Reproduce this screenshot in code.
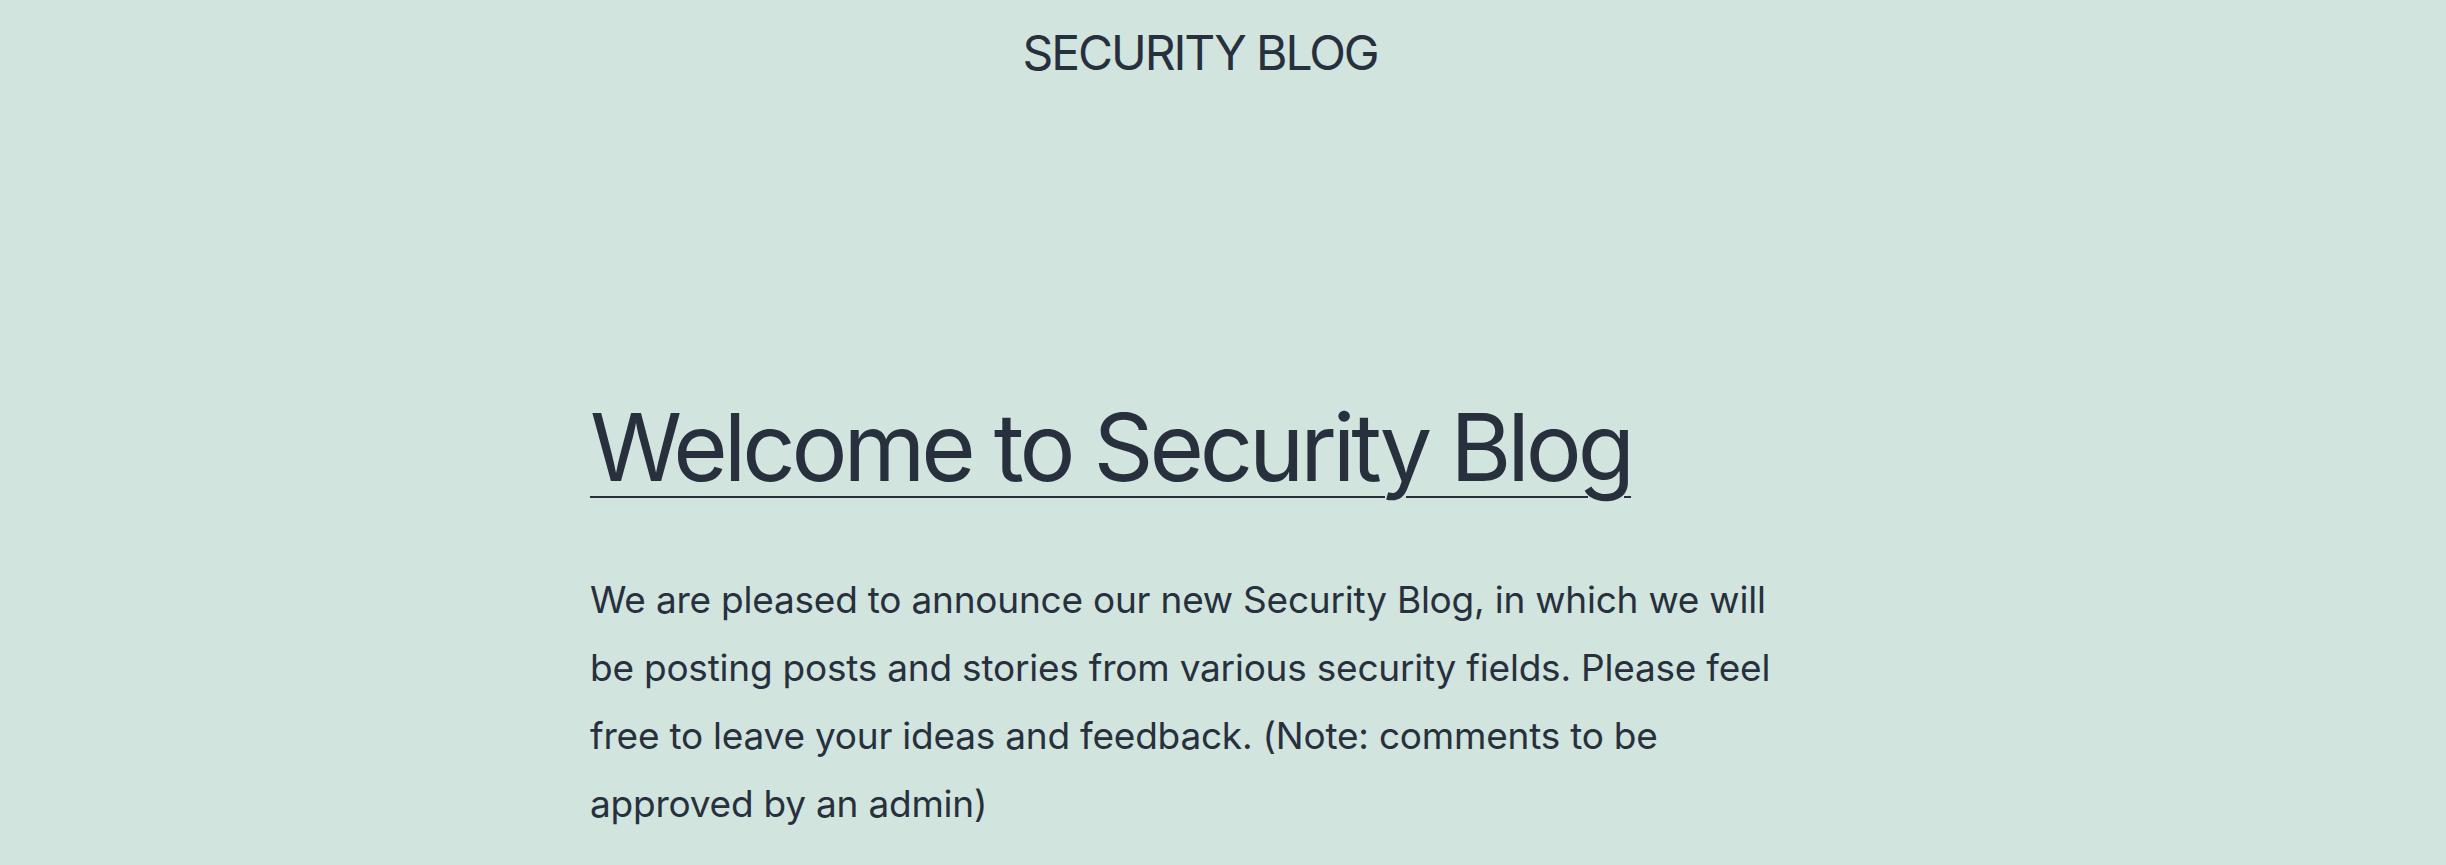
export default function App() {
  return (
    <div
      className="min-h-[865px] w-full bg-[#d1e4dd] text-[#28303d]"
      style={{ fontFamily: 'Inter, "Noto Sans", sans-serif' }}
    >
      <div className="w-[2400px]">
        <header className="pt-[24px] text-center">
          <p className="text-[48px] leading-[58px] uppercase tracking-[-0.043em]">Security Blog</p>
        </header>
        <main className="mx-auto mt-[315px] w-[1220px]">
          <h1 className="text-[93.5px] leading-[101px] tracking-[-0.044em]">
            <a href="#" className="underline decoration-2 underline-offset-[15px]">
              Welcome to Security Blog
            </a>
          </h1>
          <p className="mt-[68px] text-[37px] leading-[68px] tracking-[-0.006em]">
            We are pleased to announce our new Security Blog, in which we will
            <br />
            be posting posts and stories from various security fields. Please feel
            <br />
            free to leave your ideas and feedback. (Note: comments to be
            <br />
            approved by an admin)
          </p>
        </main>
      </div>
    </div>
  );
}
